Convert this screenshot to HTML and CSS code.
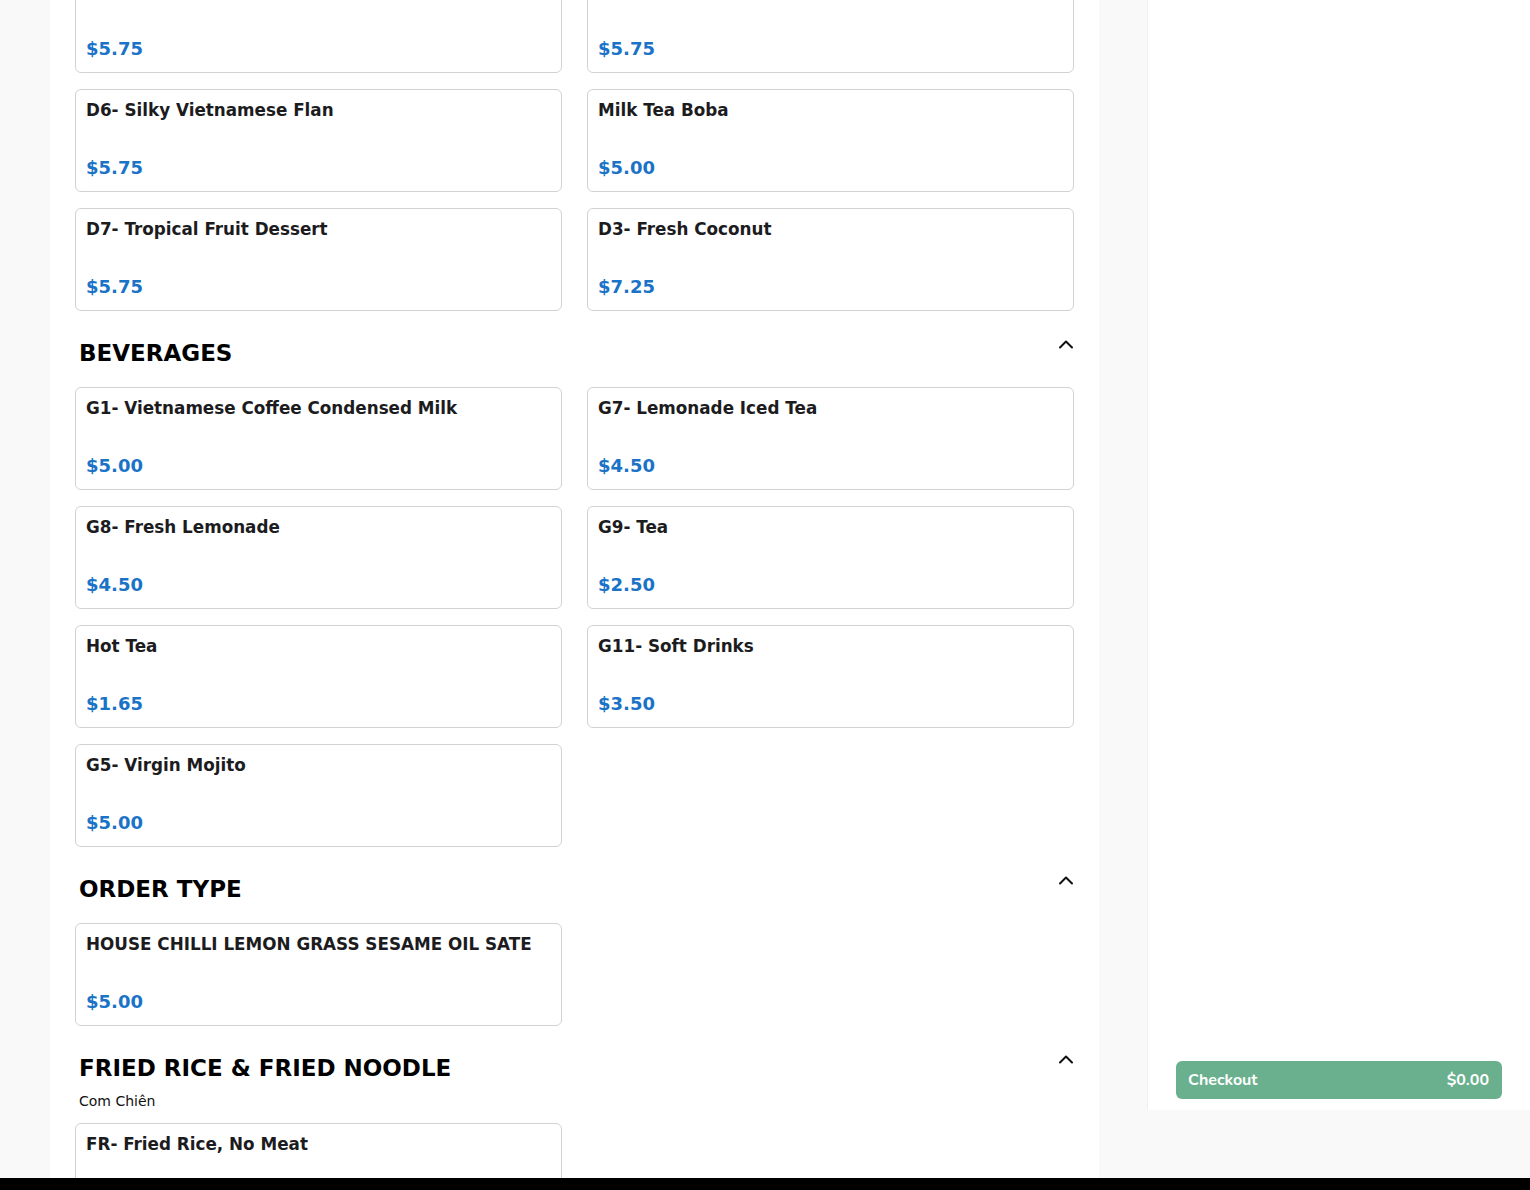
FILE: index.html
```html
<!DOCTYPE html>
<html lang="en">
<head>
    <meta charset="UTF-8">
    <meta name="viewport" content="width=device-width, initial-scale=1.0">
    <title>Menu</title>
    <link rel="stylesheet" href="styles.css">
</head>
<body>
    <div class="page">
        <main class="menu">
            <div class="items first-row">
                <div class="item">
                    <div class="item-name">&nbsp;</div>
                    <div class="item-price">$5.75</div>
                </div>
                <div class="item">
                    <div class="item-name">&nbsp;</div>
                    <div class="item-price">$5.75</div>
                </div>
                <div class="item">
                    <div class="item-name">D6- Silky Vietnamese Flan</div>
                    <div class="item-price">$5.75</div>
                </div>
                <div class="item">
                    <div class="item-name">Milk Tea Boba</div>
                    <div class="item-price">$5.00</div>
                </div>
                <div class="item">
                    <div class="item-name">D7- Tropical Fruit Dessert</div>
                    <div class="item-price">$5.75</div>
                </div>
                <div class="item">
                    <div class="item-name">D3- Fresh Coconut</div>
                    <div class="item-price">$7.25</div>
                </div>
            </div>

            <section class="category">
                <div class="category-head">
                    <h2>BEVERAGES</h2>
                    <svg class="chevron" width="16" height="10" viewBox="0 0 16 10"><polyline points="2,8.5 8,2.5 14,8.5" fill="none" stroke="#111" stroke-width="2" stroke-linecap="round" stroke-linejoin="round"/></svg>
                </div>
                <div class="items">
                    <div class="item">
                        <div class="item-name">G1- Vietnamese Coffee Condensed Milk</div>
                        <div class="item-price">$5.00</div>
                    </div>
                    <div class="item">
                        <div class="item-name">G7- Lemonade Iced Tea</div>
                        <div class="item-price">$4.50</div>
                    </div>
                    <div class="item">
                        <div class="item-name">G8- Fresh Lemonade</div>
                        <div class="item-price">$4.50</div>
                    </div>
                    <div class="item">
                        <div class="item-name">G9- Tea</div>
                        <div class="item-price">$2.50</div>
                    </div>
                    <div class="item">
                        <div class="item-name">Hot Tea</div>
                        <div class="item-price">$1.65</div>
                    </div>
                    <div class="item">
                        <div class="item-name">G11- Soft Drinks</div>
                        <div class="item-price">$3.50</div>
                    </div>
                    <div class="item">
                        <div class="item-name">G5- Virgin Mojito</div>
                        <div class="item-price">$5.00</div>
                    </div>
                </div>
            </section>

            <section class="category">
                <div class="category-head">
                    <h2>ORDER TYPE</h2>
                    <svg class="chevron" width="16" height="10" viewBox="0 0 16 10"><polyline points="2,8.5 8,2.5 14,8.5" fill="none" stroke="#111" stroke-width="2" stroke-linecap="round" stroke-linejoin="round"/></svg>
                </div>
                <div class="items">
                    <div class="item">
                        <div class="item-name">HOUSE CHILLI LEMON GRASS SESAME OIL SATE</div>
                        <div class="item-price">$5.00</div>
                    </div>
                </div>
            </section>

            <section class="category">
                <div class="category-head">
                    <h2>FRIED RICE &amp; FRIED NOODLE</h2>
                    <svg class="chevron" width="16" height="10" viewBox="0 0 16 10"><polyline points="2,8.5 8,2.5 14,8.5" fill="none" stroke="#111" stroke-width="2" stroke-linecap="round" stroke-linejoin="round"/></svg>
                </div>
                <p class="category-sub">Com Chiên</p>
                <div class="items">
                    <div class="item">
                        <div class="item-name">FR- Fried Rice, No Meat</div>
                    </div>
                </div>
            </section>
        </main>

        <aside class="cart">
            <button class="checkout">
                <span>Checkout</span>
                <span>$0.00</span>
            </button>
        </aside>
    </div>
    <div class="bottom-bar"></div>
</body>
</html>
```

FILE: styles.css
```css
body {
    margin: 0;
    background-color: #f9f9f9;
    font-family: "DejaVu Sans", Verdana, sans-serif;
    color: #1c1c1e;
}

.page {
    height: 1178px;
    overflow: hidden;
    display: flex;
    align-items: flex-start;
    padding-left: 50px;
    gap: 48px;
}

.menu {
    width: 999px;
    flex-shrink: 0;
    height: 100%;
    background-color: #ffffff;
    padding: 0 25px;
}

.items {
    display: grid;
    grid-template-columns: 1fr 1fr;
    column-gap: 25px;
    row-gap: 16px;
}

.first-row {
    margin-top: -30px;
}

.item {
    border: 1px solid #d2d2d2;
    border-radius: 6px;
    padding: 8px 10px 11px;
    background-color: #ffffff;
}

.item-name {
    font-size: 16.8px;
    font-weight: bold;
    line-height: 24px;
    margin-bottom: 34px;
}

.item-price {
    font-size: 18px;
    font-weight: bold;
    line-height: 24px;
    color: #1a73c7;
}

.category {
    margin-top: 26px;
}

.category-head {
    display: flex;
    justify-content: space-between;
    align-items: flex-start;
    padding: 0 0 0 4px;
    margin-bottom: 18px;
}

.category-head h2 {
    margin: 0;
    font-size: 23px;
    line-height: 32px;
    color: #000000;
}

.chevron {
    margin-top: 2px;
}

.category-sub {
    margin: -11px 4px 12px;
    font-size: 14px;
    line-height: 20px;
    color: #111111;
}

.cart {
    box-sizing: border-box;
    flex: 1;
    height: 1110px;
    background-color: #ffffff;
    border-left: 1px solid #f0f0f0;
    display: flex;
    flex-direction: column;
    justify-content: flex-end;
    padding: 0 28px 11px 28px;
}

.checkout {
    display: flex;
    justify-content: space-between;
    align-items: center;
    height: 38px;
    padding: 0 13px 0 12px;
    border: none;
    border-radius: 6px;
    background-color: #6ab08e;
    color: #ffffff;
    font-family: "Nunito", Lato, sans-serif;
    font-size: 16px;
    font-weight: bold;
    cursor: pointer;
}

.bottom-bar {
    height: 12px;
    background-color: #000000;
}
```
